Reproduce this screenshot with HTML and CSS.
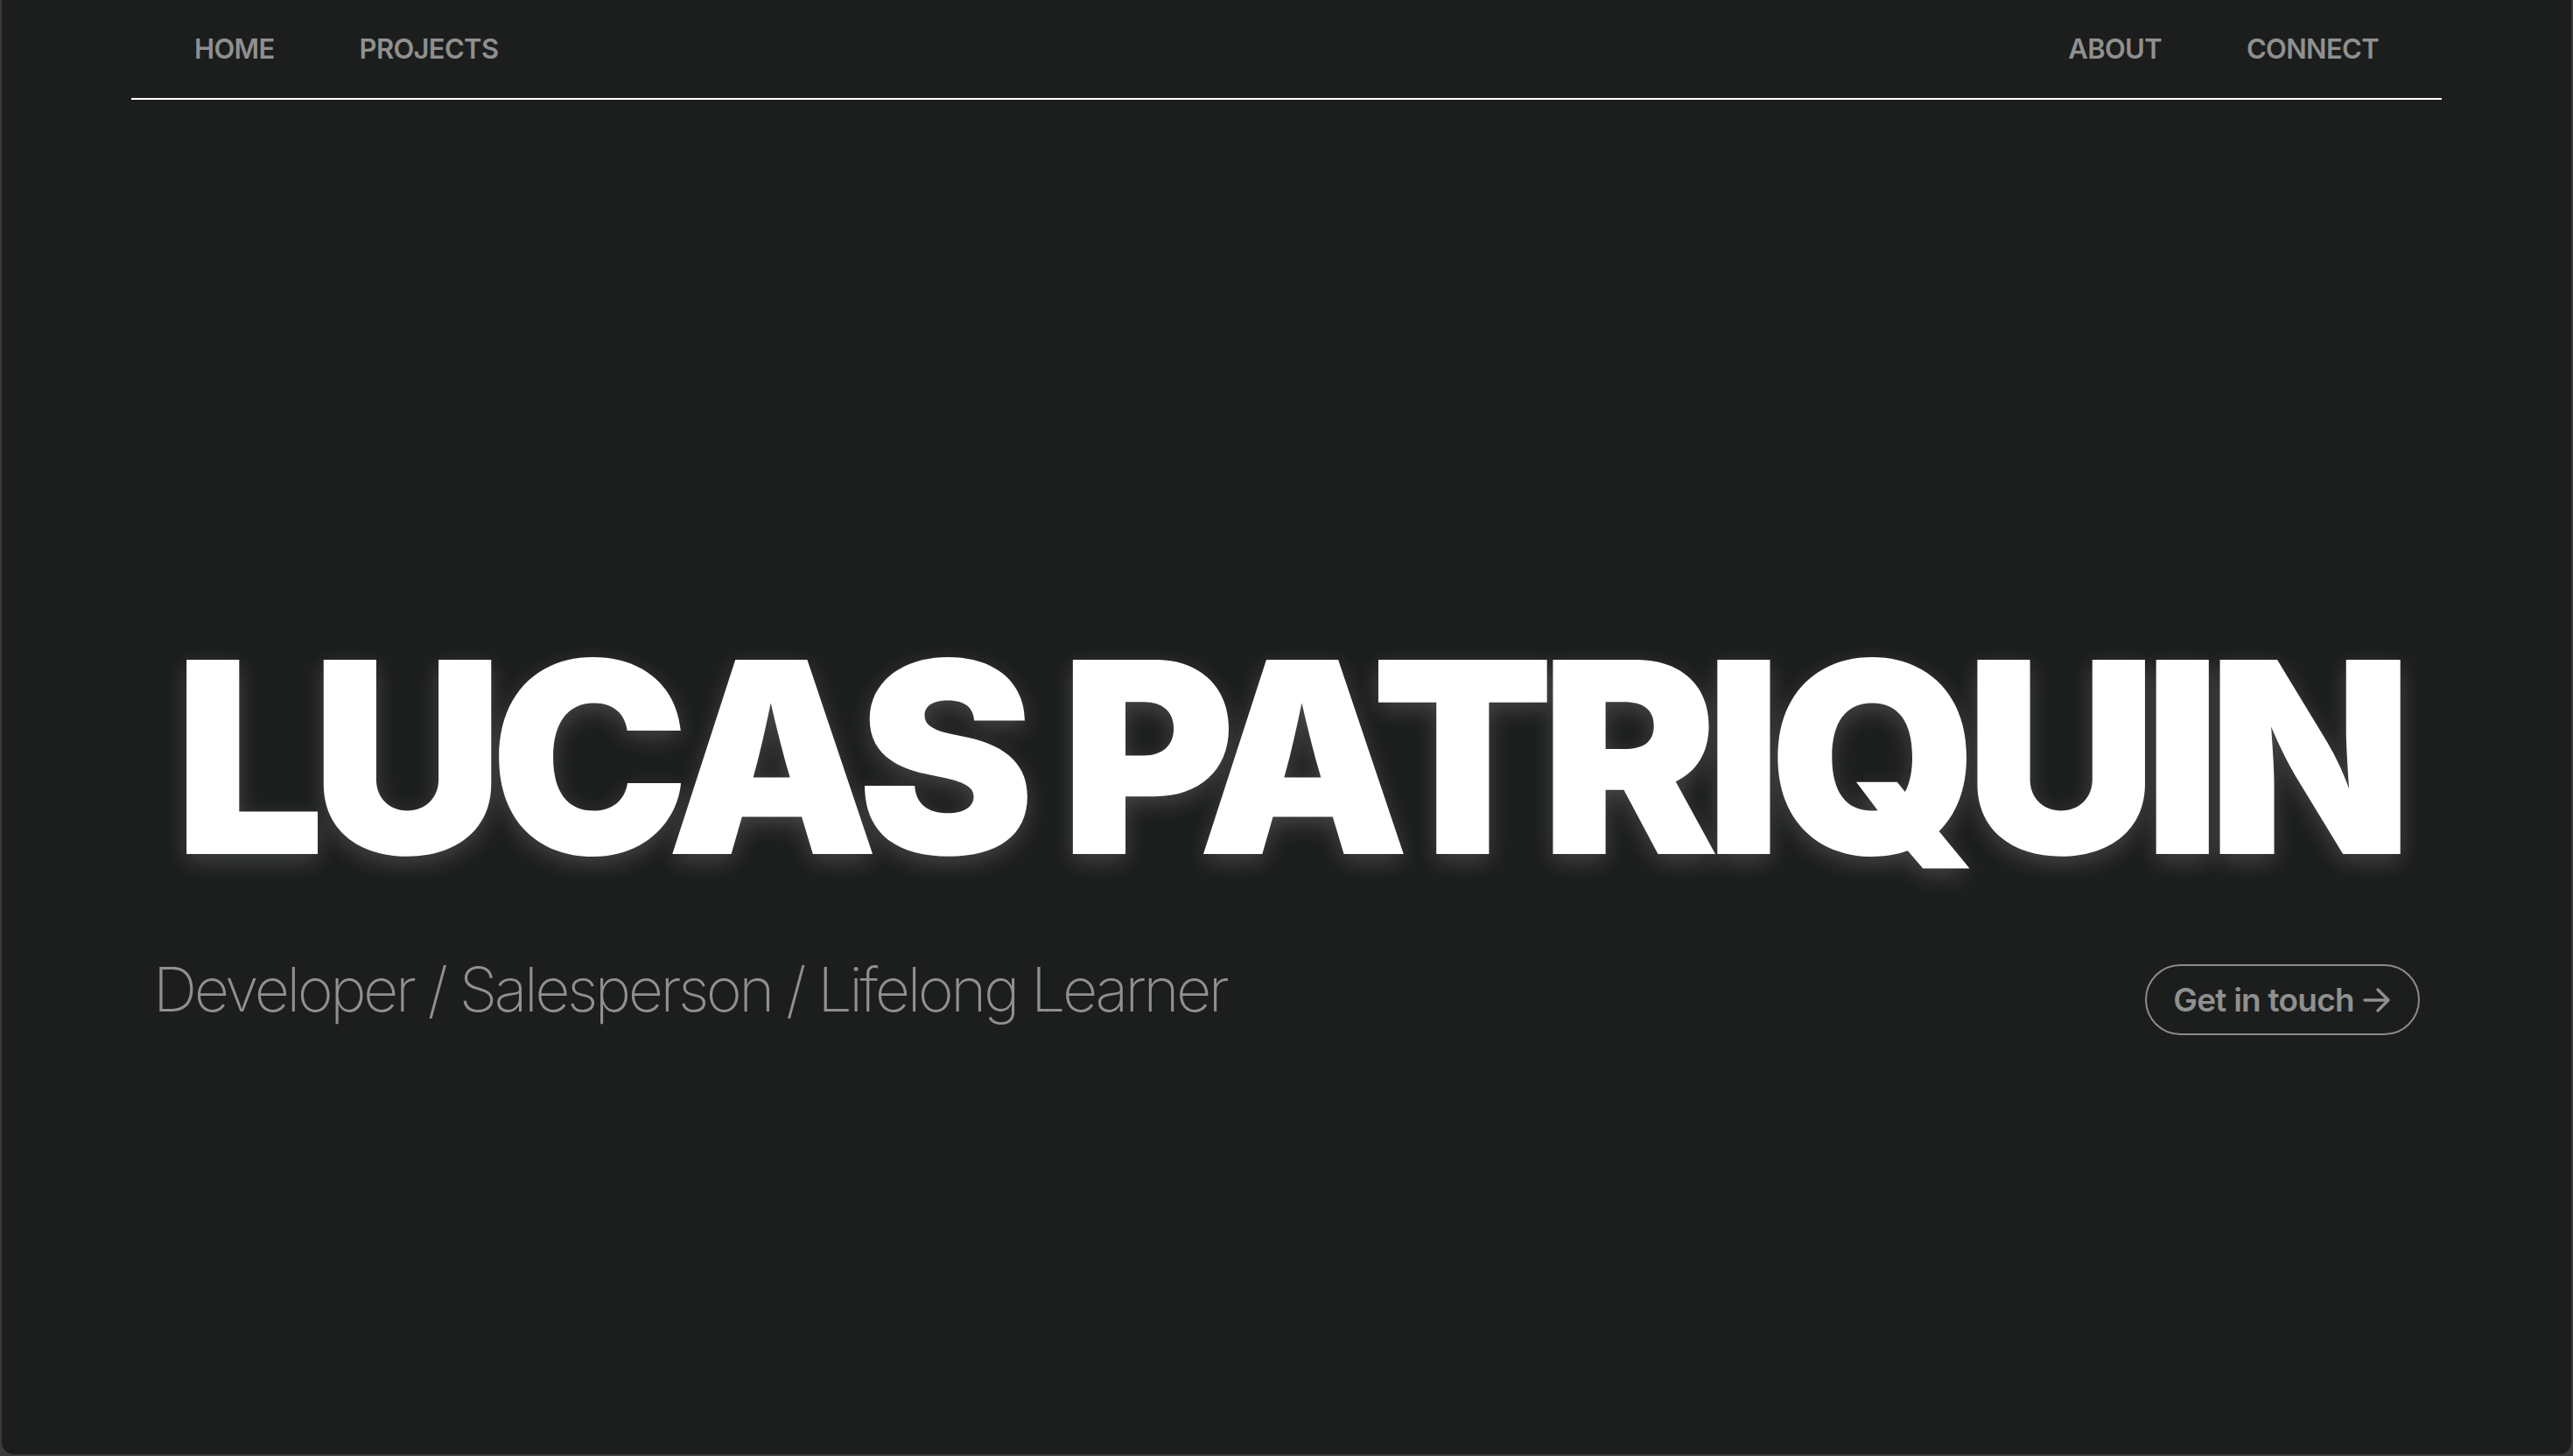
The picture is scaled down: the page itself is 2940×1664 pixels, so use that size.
FILE: index.html
```html
<!DOCTYPE html>
<html lang="en">
<head>
<meta charset="utf-8">
<title>Lucas Patriquin</title>
<link rel="stylesheet" href="styles.css">
</head>
<body>
<div class="window">
  <nav class="nav">
    <div class="nav-group">
      <a class="nav-link" href="#">HOME</a>
      <a class="nav-link" href="#">PROJECTS</a>
    </div>
    <div class="nav-group">
      <a class="nav-link" href="#">ABOUT</a>
      <a class="nav-link" href="#">CONNECT</a>
    </div>
  </nav>
  <main class="hero">
    <h1 class="title">LUCAS PATRIQUIN</h1>
    <div class="sub-row">
      <p class="subtitle">Developer / Salesperson / Lifelong Learner</p>
      <a class="cta" href="#">Get in touch
        <svg class="cta-arrow" viewBox="0 0 34 30" width="34" height="30" aria-hidden="true">
          <path d="M3 15 H30 M18 3 L30 15 L18 27" fill="none" stroke="currentColor" stroke-width="3.4" stroke-linecap="round" stroke-linejoin="round"/>
        </svg>
      </a>
    </div>
  </main>
</div>
</body>
</html>
```
FILE: styles.css
```css
* { box-sizing: border-box; }
html, body { margin: 0; padding: 0; }
body {
  background: #3b3b3b;
  font-family: Inter, "Liberation Sans", sans-serif;
  height: 1664px;
  overflow: hidden;
}
.window {
  margin: 0 2px;
  height: 1662px;
  background: #1c1d1d;
  border-radius: 0 0 14px 14px;
  display: flex;
  flex-direction: column;
}
.nav {
  margin: 0 148px;
  height: 114px;
  border-bottom: 2px solid #ffffff;
  display: flex;
  justify-content: space-between;
  align-items: center;
  padding: 0 72px 2px;
}
.nav-group {
  display: flex;
  gap: 97px;
}
.nav-link {
  color: #8f908f;
  text-decoration: none;
  font-weight: 600;
  font-size: 31px;
  letter-spacing: -0.022em;
  line-height: 1;
}
.hero {
  display: flex;
  flex-direction: column;
  padding: 0 173px;
}
.title {
  margin: 599px 0 0;
  text-align: center;
  color: #ffffff;
  font-family: Inter, "Liberation Sans", sans-serif;
  font-weight: 900;
  font-size: 305px;
  line-height: 1;
  letter-spacing: -0.052em;
  text-shadow: 0 8px 26px rgba(255, 255, 255, 0.18);
  white-space: nowrap;
}
.sub-row {
  display: flex;
  justify-content: space-between;
  align-items: flex-start;
  margin-top: 78px;
}
.subtitle {
  margin: 0;
  color: #8f908f;
  font-weight: 200;
  font-size: 70px;
  letter-spacing: -0.05em;
  line-height: 1;
}
.cta {
  display: flex;
  align-items: center;
  gap: 9px;
  height: 81px;
  margin-top: 6px;
  padding: 0 30px;
  border: 2px solid #8a8b8a;
  border-radius: 41px;
  color: #8f908f;
  text-decoration: none;
  font-weight: 600;
  font-size: 37px;
  letter-spacing: -0.02em;
}
.cta-arrow { display: block; }
```
